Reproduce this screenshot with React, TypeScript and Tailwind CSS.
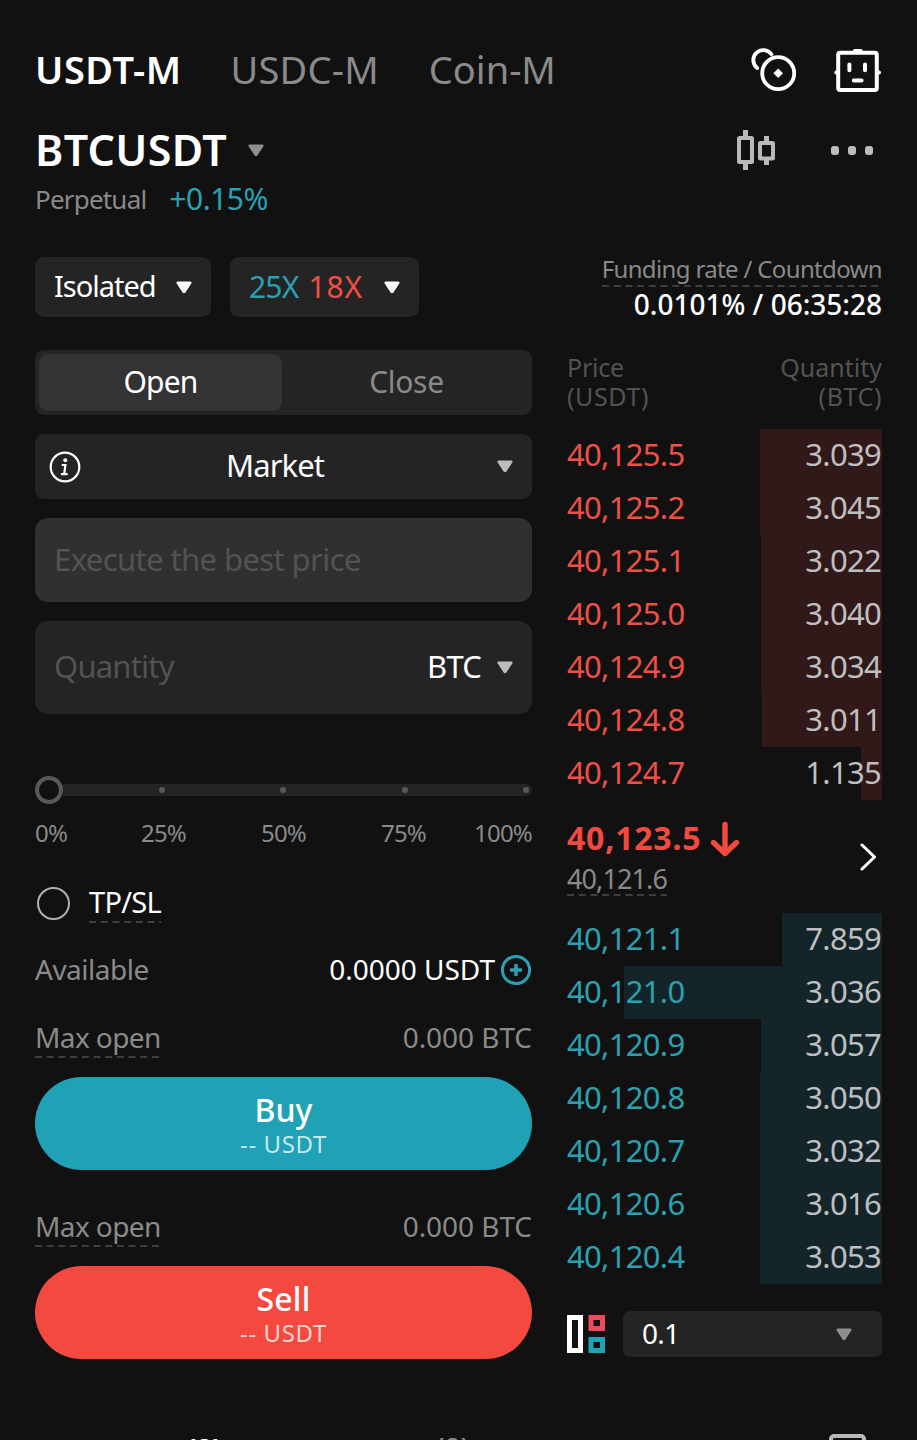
const asks = [
  { price: "40,125.5", quantity: "3.039", depth: 122 },
  { price: "40,125.2", quantity: "3.045", depth: 122 },
  { price: "40,125.1", quantity: "3.022", depth: 121 },
  { price: "40,125.0", quantity: "3.040", depth: 121 },
  { price: "40,124.9", quantity: "3.034", depth: 121 },
  { price: "40,124.8", quantity: "3.011", depth: 120 },
  { price: "40,124.7", quantity: "1.135", depth: 21 },
];

const bids = [
  { price: "40,121.1", quantity: "7.859", depth: 100 },
  { price: "40,121.0", quantity: "3.036", depth: 258 },
  { price: "40,120.9", quantity: "3.057", depth: 121 },
  { price: "40,120.8", quantity: "3.050", depth: 122 },
  { price: "40,120.7", quantity: "3.032", depth: 122 },
  { price: "40,120.6", quantity: "3.016", depth: 122 },
  { price: "40,120.4", quantity: "3.053", depth: 122 },
];

const Caret = ({ className = "" }: { className?: string }) => (
  <svg width="16" height="13" viewBox="0 0 16 13" fill="currentColor" className={`shrink-0 ${className}`}>
    <path d="M1.8 0.5h12.4c1.3 0 1.8 1 1.1 2L9.4 11.4c-.7 1.1-2.1 1.1-2.8 0L.7 2.5C0 1.5.5.5 1.8.5z" />
  </svg>
);

const Dashes = () => (
  <svg height="2" className="block w-0 min-w-full text-[#6c6c6c]">
    <line x1="0" y1="1" x2="100%" y2="1" stroke="currentColor" strokeWidth="1.2" strokeDasharray="7 4.7" />
  </svg>
);

const CoinsIcon = () => (
  <svg width="46" height="46" viewBox="0 0 46 46" fill="none" stroke="white" strokeWidth="3.8" strokeLinecap="round" className="overflow-visible">
    <circle cx="26.2" cy="26.2" r="16" />
    <path d="M5.2 21A10 10 0 1 1 19.4 7.2" />
    <path d="M26.2 21.4l4.8 4.8-4.8 4.8-4.8-4.8z" fill="white" stroke="none" />
  </svg>
);

const BotIcon = () => (
  <svg width="48" height="46" viewBox="0 0 48 46" fill="none" stroke="white" strokeLinecap="round">
    <rect x="4.2" y="5.8" width="38.6" height="37.2" rx="2" strokeWidth="4" />
    <path d="M20.8 4h6M2.3 25.4h1.5M43.5 25.4h1.5" strokeWidth="4" />
    <path d="M15.4 17.6v5.6M31 17.6v5.6M19.8 33.4h7.8" strokeWidth="4" />
  </svg>
);

const CandlesIcon = () => (
  <svg width="40" height="42" viewBox="0 0 40 42" fill="none" stroke="#b9b9bb" strokeWidth="4">
    <rect x="3" y="9" width="13" height="24" rx="0.5" />
    <path d="M9.5 1v7M9.5 34v7" strokeWidth="5" />
    <rect x="24" y="14" width="13" height="15.5" rx="0.5" />
    <path d="M30.5 7v6M30.5 30v6" strokeWidth="5" />
  </svg>
);

const InfoIcon = () => (
  <svg width="32" height="32" viewBox="0 0 32 32" fill="none" stroke="white" strokeWidth="2.2" strokeLinecap="round">
    <circle cx="16" cy="16" r="14.3" />
    <circle cx="16.3" cy="9.2" r="2" fill="white" stroke="none" />
    <path d="M13.6 14h2.8l-1.2 9M12.8 23.2h5" />
  </svg>
);

const Row = ({ price, quantity, depth, side }: { price: string; quantity: string; depth: number; side: "ask" | "bid" }) => (
  <div className="relative flex h-[53px] items-center justify-between text-[31px] tracking-[-0.7px]">
    <div
      className={`absolute inset-y-0 right-0 ${side === "ask" ? "bg-[#311919]" : "bg-[#132529]"}`}
      style={{ width: depth }}
    />
    <span className={`relative pb-[2px] ${side === "ask" ? "text-[#ee5047]" : "text-[#2ba0b0]"}`}>{price}</span>
    <span className="relative pr-px pb-[2px] text-[#bfbfc0]">{quantity}</span>
  </div>
);

const MaxOpen = () => (
  <div className="flex h-[41px] items-start justify-between text-[28px] leading-[40px] text-[#8a8a8a]">
    <div>
      <div className="h-[39px] tracking-[-0.6px]">Max open</div>
      <Dashes />
    </div>
    <div className="tracking-[-0.05px]">0.000 BTC</div>
  </div>
);

export default function App() {
  return (
    <div className="h-[1440px] w-[917px] overflow-hidden bg-[#111111] px-[35px] pt-[40px] font-['Noto_Sans',sans-serif] text-white">
      <header>
        <div className="flex h-[60px] items-center justify-between">
          <nav className="flex items-center gap-[50px] pb-px text-[38px] text-[#8a8a8a]">
            <span className="font-semibold tracking-[0.5px] text-white">USDT-M</span>
            <span className="-ml-px tracking-[0.2px]">USDC-M</span>
            <span>Coin-M</span>
          </nav>
          <div className="flex items-center gap-[36px]">
            <CoinsIcon />
            <BotIcon />
          </div>
        </div>
        <div className="mt-[25px] flex h-[50px] items-center justify-between">
          <div className="flex items-center gap-[21px]">
            <h1 className="text-[43px] font-semibold tracking-[0.3px]">BTCUSDT</h1>
            <Caret className="text-[#8e8e8e]" />
          </div>
          <div className="flex items-center gap-[55px] pr-[9px]">
            <CandlesIcon />
            <div className="flex gap-[9px]">
              <i className="h-[9px] w-[8px] rounded-[3px] bg-[#bcbcbe]" />
              <i className="h-[9px] w-[8px] rounded-[3px] bg-[#bcbcbe]" />
              <i className="h-[9px] w-[8px] rounded-[3px] bg-[#bcbcbe]" />
            </div>
          </div>
        </div>
        <div className="mt-[4px] flex h-[40px] items-center gap-[23px]">
          <span className="text-[26px] tracking-[-0.8px] text-[#8a8a8a]">Perpetual</span>
          <span className="pb-px text-[30px] tracking-[-0.5px] text-[#2ba0b0]">+0.15%</span>
        </div>
      </header>

      <div className="mt-[38px] flex h-[60px] justify-between">
        <div className="flex gap-[19px]">
          <button className="flex w-[176px] items-center justify-between rounded-[9px] bg-[#242424] px-[19px] text-[29px] tracking-[-1px]">
            <span className="pb-[2px]">Isolated</span>
            <Caret />
          </button>
          <button className="flex w-[189px] items-center justify-between rounded-[9px] bg-[#242424] px-[19px] text-[30px]">
            <span className="flex gap-[10px] pb-[2px]">
              <span className="tracking-[-0.8px] text-[#2ba0b0]">25X</span>
              <span className="tracking-[0.8px] text-[#ee5047]">18X</span>
            </span>
            <Caret />
          </button>
        </div>
        <div className="text-right">
          <div className="h-[28px] text-[24px] leading-[23px] tracking-[-0.65px] text-[#8a8a8a]">Funding rate / Countdown</div>
          <Dashes />
          <div className="text-[28px] leading-[34px] font-medium">0.0101% / 06:35:28</div>
        </div>
      </div>

      <main className="mt-[33px] flex justify-between">
        <section className="w-[497px]">
          <div className="flex h-[65px] rounded-[9px] bg-[#242424] p-[4px] text-[30px] tracking-[-0.8px]">
            <button className="w-[243px] rounded-[9px] bg-[#333335] pb-[2px]">Open</button>
            <button className="flex-1 pb-[2px] pl-[3px] tracking-[-0.3px] text-[#8a8a8a]">Close</button>
          </div>

          <button className="mt-[19px] flex h-[65px] w-full items-center rounded-[9px] bg-[#242424] pr-[19px] pl-[14px] text-[31px] tracking-[-0.9px]">
            <InfoIcon />
            <span className="flex-1 pr-[28px] pb-[2px]">Market</span>
            <Caret className="text-[#bcbcbe]" />
          </button>

          <div className="mt-[19px] flex h-[84px] items-center rounded-[13px] bg-[#303030] px-[19px] pb-[2px] text-[31px] tracking-[-0.6px] text-[#535353]">
            Execute the best price
          </div>

          <div className="mt-[19px] flex h-[93px] items-center rounded-[13px] bg-[#242424] pr-[19px] pl-[19px] text-[31px] tracking-[-0.8px]">
            <span className="flex-1 pb-[2px] text-[#535353]">Quantity</span>
            <span className="pb-[2px]">BTC</span>
            <Caret className="ml-[16px] text-[#bcbcbe]" />
          </div>

          <div className="mt-[62px] flex h-[28px] items-center">
            <div className="size-[28px] rounded-full border-[4.5px] border-[#585858]" />
            <div className="flex h-[12px] flex-1 items-center justify-between rounded-r-full bg-[#242424] pr-[3px] pl-[96px]">
              <i className="size-[6px] rounded-full bg-[#585858]" />
              <i className="size-[6px] rounded-full bg-[#585858]" />
              <i className="size-[6px] rounded-full bg-[#585858]" />
              <i className="size-[6px] rounded-full bg-[#585858]" />
            </div>
          </div>
          <div className="mt-[14px] flex h-[30px] items-center text-[24px] tracking-[-0.8px] text-[#8a8a8a]">
            <span className="w-[106px]">0%</span>
            <span className="w-[120px]">25%</span>
            <span className="w-[120px]">50%</span>
            <span className="flex-1">75%</span>
            <span>100%</span>
          </div>

          <div className="mt-[34px] flex h-[40px] items-center pl-[2px]">
            <div className="mt-[2px] size-[33px] rounded-full border-2 border-[#b0b0b2]" />
            <div className="ml-[19px] pt-[1px]">
              <div className="h-[38px] text-[29px] leading-[38px] tracking-[-0.7px]">TP/SL</div>
              <Dashes />
            </div>
          </div>

          <div className="mt-[27px] flex h-[40px] items-center text-[28px]">
            <span className="flex-1 tracking-[-0.5px] text-[#8a8a8a]">Available</span>
            <span>0.0000 USDT</span>
            <svg width="32" height="32" viewBox="0 0 32 32" fill="none" stroke="#2ba0b0" className="mt-[2px] ml-[5px]">
              <circle cx="16" cy="16" r="13.6" strokeWidth="3" />
              <path d="M16 10v12M10 16h12" strokeWidth="3.4" />
            </svg>
          </div>

          <div className="mt-[28px]">
            <MaxOpen />
          </div>
          <button className="mt-[19px] flex h-[93px] w-full flex-col items-center rounded-full bg-[#1fa2b5] pt-[14px]">
            <span className="text-[32px] leading-[38px] font-medium">Buy</span>
            <span className="text-[24px] leading-[29px] tracking-[0.6px] text-white/75">-- USDT</span>
          </button>
          <div className="mt-[36px]">
            <MaxOpen />
          </div>
          <button className="mt-[19px] flex h-[93px] w-full flex-col items-center rounded-full bg-[#f4493f] pt-[14px]">
            <span className="text-[32px] leading-[38px] font-medium tracking-[0.2px]">Sell</span>
            <span className="text-[24px] leading-[29px] tracking-[0.6px] text-white/75">-- USDT</span>
          </button>
        </section>

        <section className="w-[315px]">
          <div className="flex justify-between pt-[3px] text-[25px] leading-[29px] text-[#535353]">
            <div>
              <div className="tracking-[-0.2px]">Price</div>
              <div className="tracking-[0.6px]">(USDT)</div>
            </div>
            <div className="text-right">
              <div>Quantity</div>
              <div className="tracking-[0.6px]">(BTC)</div>
            </div>
          </div>

          <div className="mt-[18px]">
            {asks.map((row) => (
              <Row key={row.price} side="ask" {...row} />
            ))}
          </div>

          <div className="flex h-[113px] items-center justify-between pr-[5px] pb-[2px]">
            <div>
              <div className="flex items-center gap-[9px] text-[32px] leading-[44px] font-bold tracking-[0.8px] text-[#f4493f]">
                40,123.5
                <svg width="30" height="36" viewBox="0 0 30 36" fill="none" stroke="currentColor" strokeWidth="5.4" strokeLinecap="round" strokeLinejoin="round" className="mt-[2px]">
                  <path d="M15 3.5v29M3.5 21.5L15 32.5l11.5-11" />
                </svg>
              </div>
              <div className="w-fit">
                <div className="h-[34px] text-[27px] leading-[37px] tracking-[-0.9px] text-[#8a8a8a]">40,121.6</div>
                <Dashes />
              </div>
            </div>
            <svg width="17" height="28" viewBox="0 0 17 28" fill="none" stroke="white" strokeWidth="3" strokeLinecap="round" strokeLinejoin="round" className="mt-[2px]">
              <path d="M2 2l12.5 12L2 26" />
            </svg>
          </div>

          <div>
            {bids.map((row) => (
              <Row key={row.price} side="bid" {...row} />
            ))}
          </div>

          <div className="mt-[27px] flex h-[46px] items-center justify-between">
            <svg width="38" height="38" viewBox="0 0 38 38" fill="none" strokeWidth="5">
              <rect x="2.5" y="2.5" width="11" height="33" stroke="white" />
              <rect x="24" y="2.5" width="11.5" height="11" stroke="#f0485d" />
              <rect x="24" y="24.5" width="11.5" height="11" stroke="#1fa2b5" />
            </svg>
            <button className="flex h-full w-[259px] items-center justify-between rounded-[7px] bg-[#242424] pr-[30px] pl-[19px] text-[28px] tracking-[-0.8px]">
              <span className="pb-[2px]">0.1</span>
              <Caret className="text-[#8e8e8e]" />
            </button>
          </div>
        </section>
      </main>

      <footer className="mt-[68px] flex items-start text-[32px] leading-[44px]">
        <div className="flex w-[245px] font-semibold">
          <span className="w-[151px] pt-[5px]">Positions</span>
          <span className="pt-px tracking-[-1.2px]">(0)</span>
        </div>
        <div className="flex flex-1 text-[#8a8a8a]">
          <span className="w-[155px] pt-[4px]">All orders</span>
          <span className="pt-px tracking-[-1.2px]">(0)</span>
        </div>
        <div className="mt-[7px] mr-[16px] h-[36px] w-[37px] rounded-[5px] border-4 border-[#b9b9bb]" />
      </footer>
    </div>
  );
}
